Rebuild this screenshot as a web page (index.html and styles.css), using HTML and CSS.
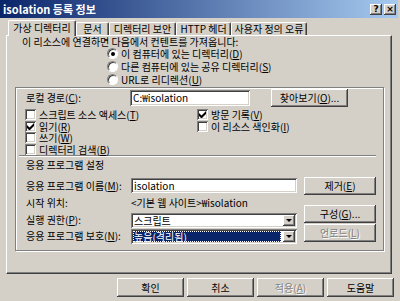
FILE: index.html
```html
<!DOCTYPE html>
<html>
<head>
    <meta charset="UTF-8">
    <title>isolation 등록 정보</title>
    <link rel="stylesheet" href="styles.css">
</head>
<body>
    <div class="window">
        <div class="titlebar">
            <span class="title">isolation 등록 정보</span>
            <span class="cap-btn">?</span>
            <span class="cap-btn">×</span>
        </div>

        <div class="content">
            <!-- Tabs -->
            <div class="tabs">
                <div class="tab active t1">가상 디렉터리</div>
                <div class="tab t2">문서</div>
                <div class="tab t3">디렉터리 보안</div>
                <div class="tab t4">HTTP 헤더</div>
                <div class="tab t5">사용자 정의 오류</div>
            </div>

            <div class="panel">
                <p class="intro">이 리소스에 연결하면 다음에서 컨텐트를 가져옵니다:</p>
                <div class="radios">
                    <div class="opt"><span class="radio on"></span>이 컴퓨터에 있는 디렉터리(<u>D</u>)</div>
                    <div class="opt"><span class="radio"></span>다른 컴퓨터에 있는 공유 디렉터리(<u>S</u>)</div>
                    <div class="opt"><span class="radio"></span>URL로 리디렉션(<u>U</u>)</div>
                </div>

                <div class="group">
                    <div class="path-row">
                        <span class="path-label">로컬 경로(<u>C</u>):</span>
                        <span class="field path-field">C:₩isolation</span>
                        <span class="btn browse">찾아보기(<u>O</u>)...</span>
                    </div>

                    <div class="checks">
                        <div class="opt"><span class="check"></span>스크립트 소스 액세스(<u>T</u>)</div>
                        <div class="opt"><span class="check on"><svg width="7" height="7" viewBox="0 0 7 7"><path d="M0 2v3l2 2h1l4-4V0L2.5 4.5z" fill="#000"/></svg></span>방문 기록(<u>V</u>)</div>
                        <div class="opt"><span class="check on"><svg width="7" height="7" viewBox="0 0 7 7"><path d="M0 2v3l2 2h1l4-4V0L2.5 4.5z" fill="#000"/></svg></span>읽기(<u>R</u>)</div>
                        <div class="opt"><span class="check"></span>이 리소스 색인화(<u>I</u>)</div>
                        <div class="opt"><span class="check"></span>쓰기(<u>W</u>)</div>
                        <div></div>
                        <div class="opt"><span class="check"></span>디렉터리 검색(<u>B</u>)</div>
                    </div>

                    <div class="sep"></div>
                    <div class="section">응용 프로그램 설정</div>

                    <div class="app">
                        <div class="app-fields">
                            <span>응용 프로그램 이름(<u>M</u>):</span>
                            <span class="field">isolation</span>
                            <span>시작 위치:</span>
                            <span>&lt;기본 웹 사이트&gt;₩isolation</span>
                            <span>실행 권한(<u>P</u>):</span>
                            <span class="combo"><span class="combo-text">스크립트</span><span class="combo-arrow"></span></span>
                            <span>응용 프로그램 보호(<u>N</u>):</span>
                            <span class="combo"><span class="combo-text selected">높음(격리됨)</span><span class="combo-arrow"></span></span>
                        </div>
                        <div class="app-buttons">
                            <span class="btn">제거(<u>E</u>)</span>
                            <span class="btn config">구성(<u>G</u>)...</span>
                            <span class="btn disabled unload">언로드(<u>L</u>)</span>
                        </div>
                    </div>
                </div>
            </div>

            <div class="footer">
                <span class="btn">확인</span>
                <span class="btn">취소</span>
                <span class="btn disabled">적용(<u>A</u>)</span>
                <span class="btn">도움말</span>
            </div>
        </div>
    </div>
</body>
</html>
```

FILE: styles.css
```css
* { box-sizing: border-box; margin: 0; padding: 0; }
body {
    font-family: "Noto Sans CJK KR", "DejaVu Sans", sans-serif;
    font-size: 10px;
    line-height: 12px;
    color: #000;
    background: #d4d0c8;
}
u { text-decoration: underline; text-underline-offset: 1px; }

.window {
    width: 400px;
    height: 301px;
    background: #d4d0c8;
    overflow: hidden;
}

/* Title bar */
.titlebar {
    width: 398px;
    height: 18px;
    display: flex;
    align-items: center;
    gap: 2px;
    padding: 0 2px 0 3px;
    background: linear-gradient(to right, #0a246a, #a6caf0);
    color: #fff;
}
.title {
    flex: 1;
    font-weight: bold;
    font-size: 11px;
    line-height: 18px;
}
.cap-btn {
    width: 12px;
    height: 11px;
    background: #d4d0c8;
    color: #000;
    font-family: "DejaVu Sans", sans-serif;
    font-weight: bold;
    font-size: 9px;
    line-height: 11px;
    text-align: center;
    box-shadow: inset -1px -1px #404040, inset 1px 1px #fff, inset -2px -2px #808080;
}

.content { padding: 0 8px 0 6px; }

/* Tabs */
.tabs {
    height: 17px;
    display: flex;
    align-items: flex-end;
    padding-left: 2px;
}
.tab {
    height: 13px;
    line-height: 12px;
    text-align: center;
    border-top: 1px solid #fff;
    border-left: 1px solid #fff;
    border-right: 1px solid #404040;
    border-radius: 2px 2px 0 0;
    box-shadow: inset -1px 0 #808080;
    background: #d4d0c8;
}
.tab.active {
    position: relative;
    height: 16px;
    margin-bottom: -1px;
    line-height: 14px;
}
.t1 { width: 68px; }
.t2 { width: 33px; }
.t3 { width: 67px; }
.t4 { width: 55px; }
.t5 { width: 76px; }

.panel {
    height: 239px;
    border: 1px solid;
    border-color: #fff #404040 #404040 #fff;
    box-shadow: inset -1px -1px #808080;
}
.intro {
    margin: 1px 0 0 15px;
    line-height: 10px;
}
.radios { margin-left: 100px; }
.radios .opt { height: 13px; }

.opt {
    display: flex;
    align-items: center;
    line-height: 11px;
    white-space: nowrap;
}
.radio {
    width: 11px;
    height: 11px;
    margin-right: 3px;
    border-radius: 50%;
    border: 1px solid;
    border-color: #808080 #fff #fff #808080;
    background: #fff;
    box-shadow: inset 1px 1px #404040;
    display: flex;
    align-items: center;
    justify-content: center;
}
.radio.on::after {
    content: "";
    width: 4px;
    height: 4px;
    border-radius: 50%;
    background: #000;
}
.check {
    width: 11px;
    height: 11px;
    margin-right: 3px;
    background: #fff;
    box-shadow: inset 1px 1px #808080, inset -1px -1px #fff, inset 2px 2px #404040, inset -2px -2px #d4d0c8;
    display: flex;
    align-items: center;
    justify-content: center;
}

/* Group box */
.group {
    width: 369px;
    height: 164px;
    margin: 1px 0 0 8px;
    border: 1px solid #808080;
    box-shadow: inset 1px 1px #fff, 1px 1px #fff;
}
.path-row {
    height: 18px;
    margin: 1px 0 0 10px;
    display: flex;
    align-items: center;
}
.path-label { width: 104px; }
.field {
    height: 15px;
    padding: 0 3px;
    line-height: 15px;
    background: #fff;
    box-shadow: inset 1px 1px #808080, inset -1px -1px #fff, inset 2px 2px #404040, inset -2px -2px #d4d0c8;
    white-space: nowrap;
}
.path-field { width: 120px; height: 16px; line-height: 16px; }
.btn {
    height: 18px;
    display: flex;
    align-items: center;
    justify-content: center;
    background: #d4d0c8;
    white-space: nowrap;
    box-shadow: inset -1px -1px #404040, inset 1px 1px #fff, inset -2px -2px #808080;
}
.browse { width: 77px; margin-left: 21px; }
.btn.disabled { color: #808080; text-shadow: 1px 1px #fff; }

.checks {
    margin: 2px 0 0 9px;
    display: grid;
    grid-template-columns: 172px 1fr;
    grid-auto-rows: 11.5px;
}
.sep {
    width: 357px;
    height: 2px;
    margin-left: 3px;
    border-top: 1px solid #808080;
    border-bottom: 1px solid #fff;
}
.section {
    margin: 2px 0 0 10px;
    line-height: 12px;
}

/* Application settings */
.app {
    display: flex;
    margin: 6px 0 0 10px;
}
.app-fields {
    display: grid;
    grid-template-columns: 105px 166px;
    grid-template-rows: 17px 18px 16px 16px;
    align-items: center;
    line-height: 12px;
}
.combo {
    height: 15px;
    display: flex;
    padding: 2px;
    background: #fff;
    box-shadow: inset 1px 1px #808080, inset -1px -1px #fff, inset 2px 2px #404040, inset -2px -2px #d4d0c8;
}
.combo-text {
    flex: 1;
    margin-right: 2px;
    padding-left: 1px;
    line-height: 11px;
}
.combo-text.selected {
    background: #0a246a;
    color: #fff;
    outline: 1px dotted #fff;
    outline-offset: -1px;
}
.combo-arrow {
    width: 12px;
    display: flex;
    align-items: center;
    justify-content: center;
    background: #d4d0c8;
    box-shadow: inset -1px -1px #404040, inset 1px 1px #fff, inset -2px -2px #808080;
}
.combo-arrow::after {
    content: "";
    border-left: 3px solid transparent;
    border-right: 3px solid transparent;
    border-top: 3px solid #000;
}
.app-buttons {
    width: 72px;
    margin-left: 7px;
    display: flex;
    flex-direction: column;
}
.config { margin-top: 10px; }
.unload { margin-top: 1px; }

/* Footer */
.footer {
    display: flex;
    justify-content: flex-end;
    gap: 3px;
    margin: 4px -2px 0 0;
}
.footer .btn { width: 67px; height: 19px; }
```
